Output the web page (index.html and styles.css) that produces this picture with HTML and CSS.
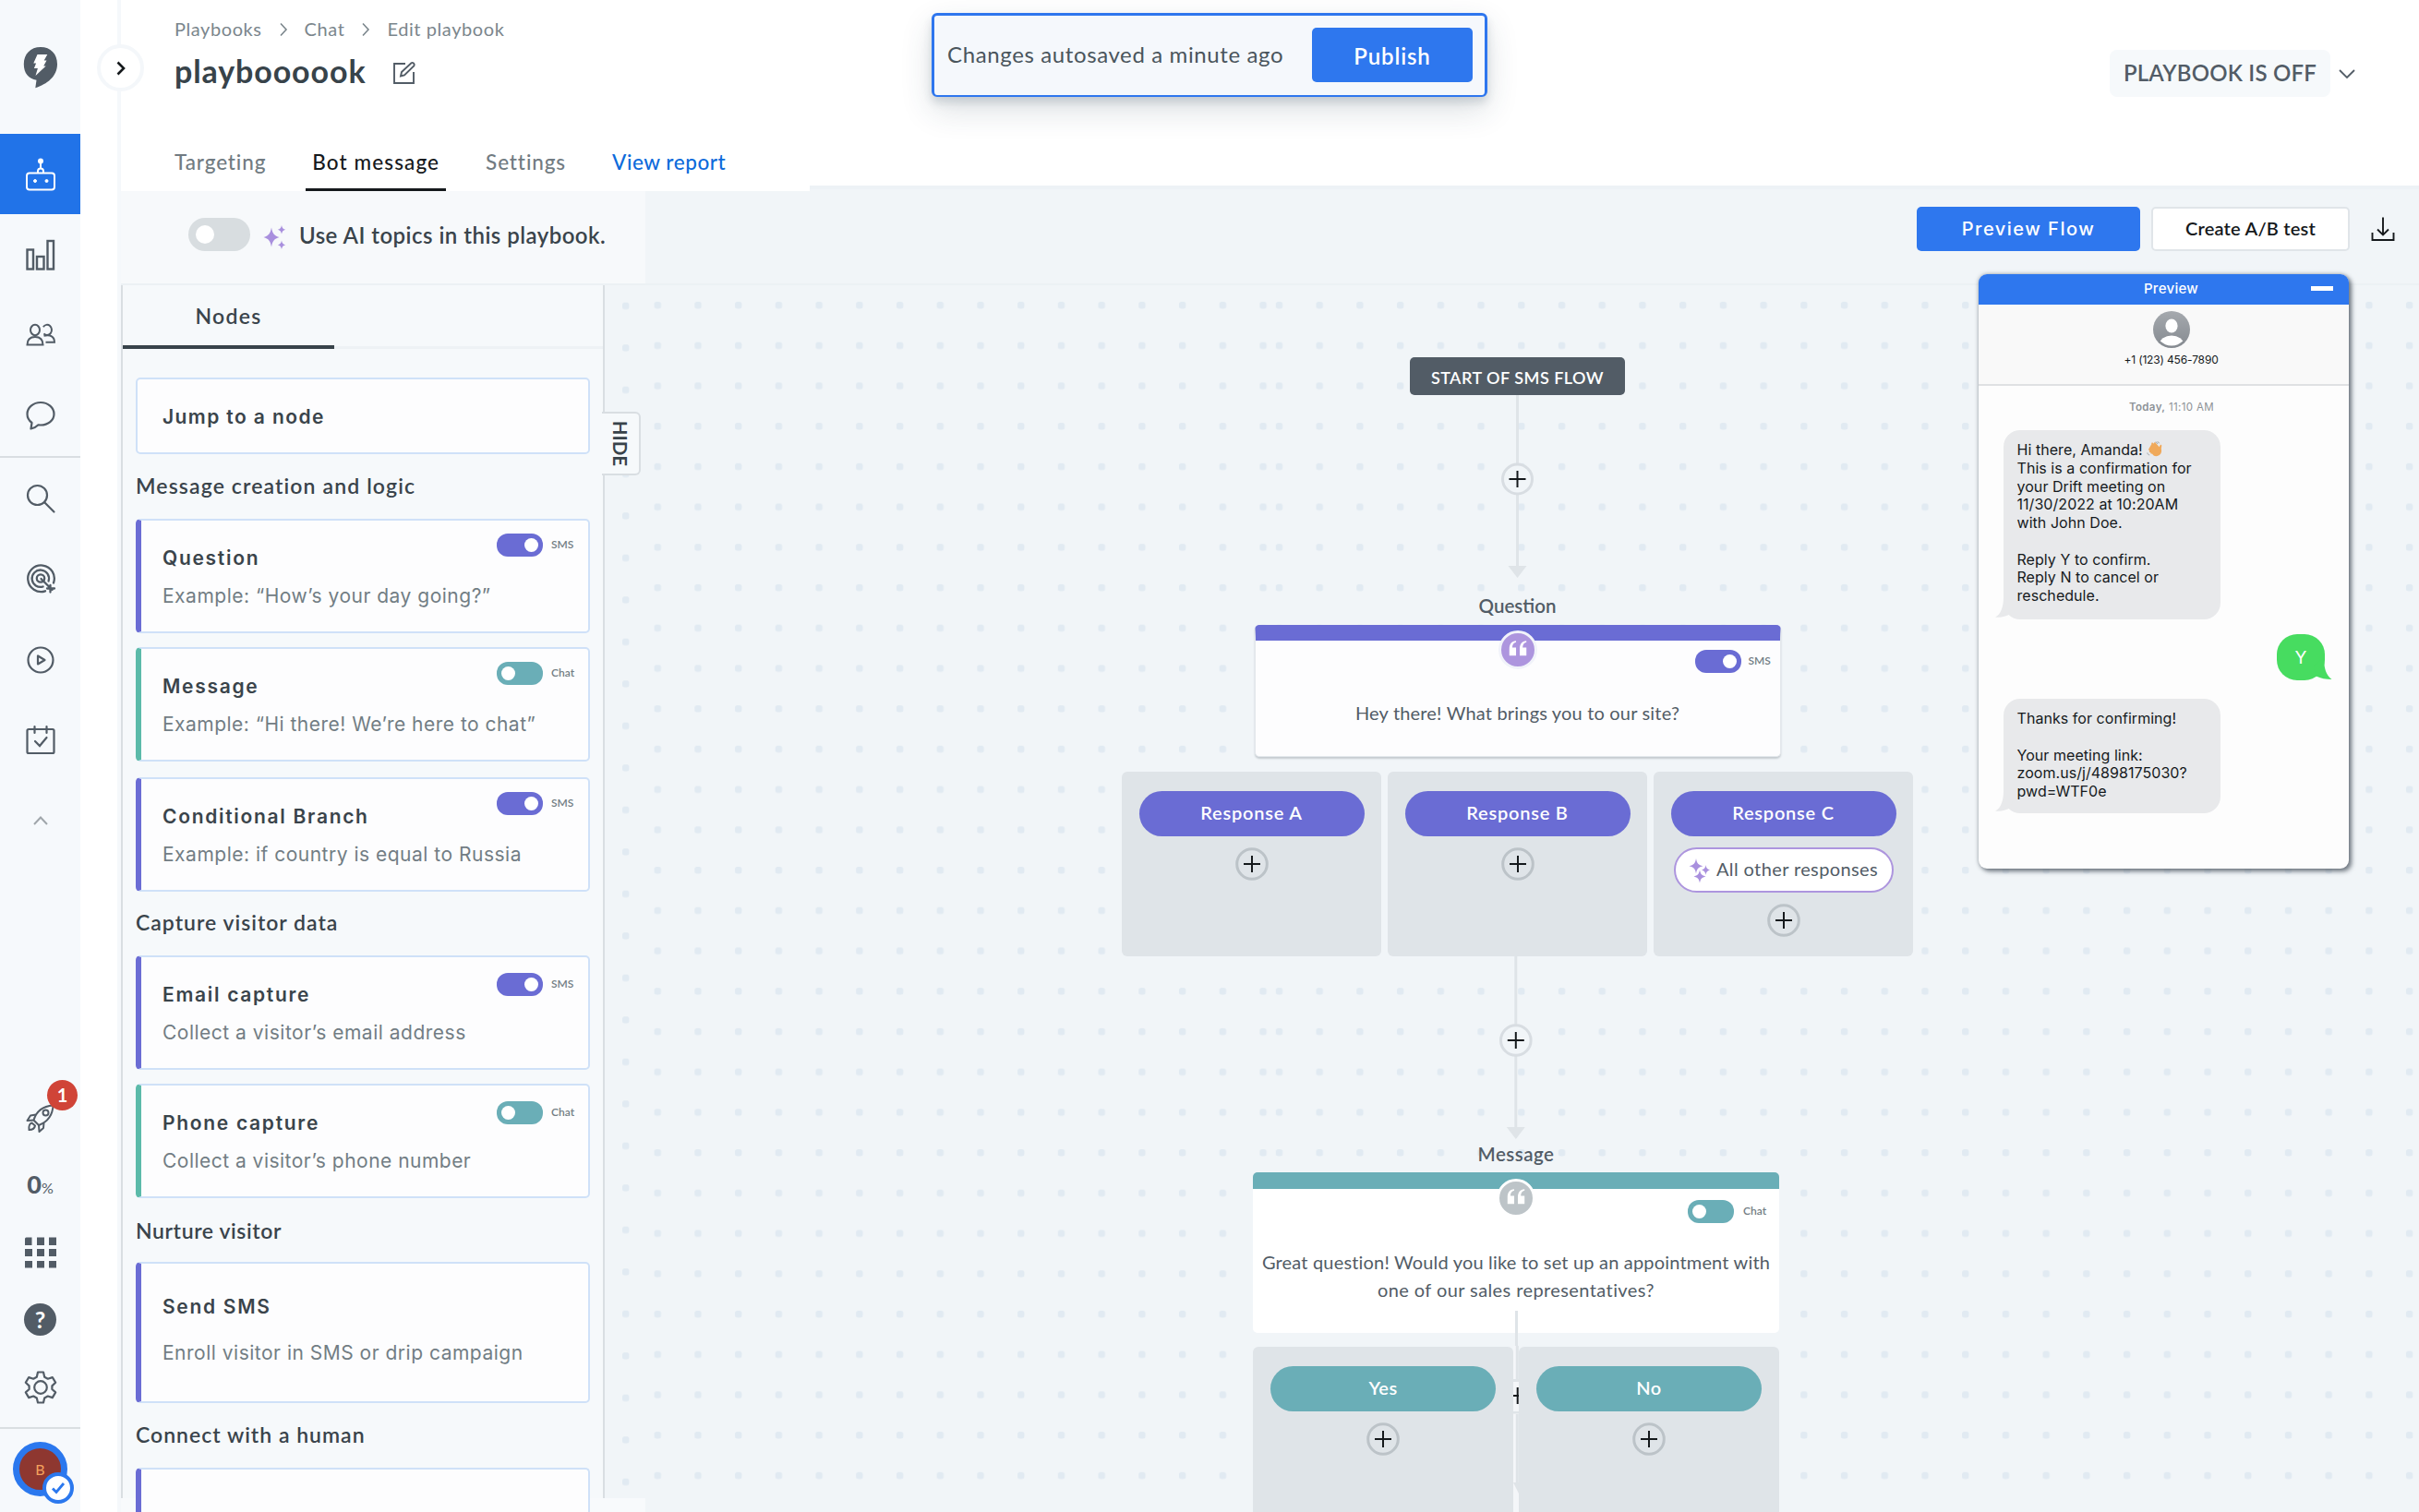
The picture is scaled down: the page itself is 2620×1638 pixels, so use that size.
FILE: index.html
```html
<!DOCTYPE html>
<html lang="en">
<head>
<meta charset="utf-8">
<title>Edit playbook</title>
<link rel="stylesheet" href="styles.css">
</head>
<body>
<svg class="defs" width="0" height="0" aria-hidden="true">
  <defs>
    <symbol id="plus" viewBox="0 0 36 36">
      <circle cx="18" cy="18" r="16.3" fill="none" stroke="currentColor" stroke-width="3"/>
      <path d="M18 9v18M9 18h18" stroke="#15191c" stroke-width="2" fill="none"/>
    </symbol>
    <symbol id="quote" viewBox="0 0 20 20">
      <path d="M8.200 2.600C5.600 3.300 4.500 5 4.500 7.800h3.700v7.800H1.600V9C1.600 4.500 3.800 1.500 8.200 1.200z" fill="#fff"/>
      <path d="M18.400 2.600c-2.600.7-3.700 2.400-3.700 5.200h3.700v7.800h-6.600V9c0-4.500 2.200-7.500 6.600-7.800z" fill="#fff"/>
    </symbol>
  </defs>
</svg>
<div class="app">
  <nav class="sidebar">
    <a class="cell logo"><svg width="40" height="46" viewBox="0 0 40 46"><path d="M20 1C9 1 1.800 8.500 1.800 19.500c0 10 5.200 15.800 13.700 17.200l-1.200 8.600C27 41 38 33 38 19.500 38 8.500 31 1 20 1z" fill="#525c66"/><path d="M16.500 9h10.800l-3.600 6.600h2.800l-3.300 6h2.500L14.500 32l2.400-8h-4l2.200-5.400h-2.800z" fill="#fff"/></svg></a>
    <a class="cell active"><svg width="36" height="38" viewBox="0 0 36 38" fill="none" stroke="#fff" stroke-width="2"><rect x="3" y="17.500" width="30" height="18" rx="3"/><path d="M15 17v-1.500a3 3 0 0 1 6 0V17M18 12V6"/><circle cx="18" cy="4.500" r="2" fill="#fff"/><circle cx="12" cy="26" r="1.500" fill="#fff" stroke-width="1"/><circle cx="24.500" cy="26" r="1.500" fill="#fff" stroke-width="1"/></svg></a>
    <a class="cell"><svg width="36" height="36" viewBox="0 0 36 36" fill="none" stroke="#525c66" stroke-width="2.400"><rect x="3.500" y="12.500" width="6.500" height="21"/><rect x="14" y="20" width="7.500" height="13.500"/><rect x="25.500" y="3" width="6.500" height="30.500"/></svg></a>
    <a class="cell"><svg width="34" height="26" viewBox="0 0 34 26" fill="none" stroke="#525c66" stroke-width="2"><ellipse cx="11" cy="7.500" rx="5" ry="5.700"/><path d="M2.500 23.500c0-6 2.500-8.600 8.500-8.600s8.500 2.600 8.500 8.600z"/><path d="M20.500 11.400a5 5.600 0 1 0-.6-7.200M20.500 13.800c7-1.600 11.500.6 11.500 6.900h-9.500"/></svg></a>
    <a class="cell"><svg width="34" height="34" viewBox="0 0 34 34" fill="none" stroke="#525c66" stroke-width="2.200" stroke-linejoin="round"><path d="M6.500 31.500l1-6.500C4.300 22.600 2.500 19.500 2.500 15.500 2.500 8.500 9 3 17 3s14.500 5.500 14.500 12.500S25 27.500 17 27.500l-2.500-.2c-2 2-4.500 3.700-8 4.200z"/></svg></a>
    <hr>
    <a class="cell"><svg width="34" height="34" viewBox="0 0 34 34" fill="none" stroke="#525c66" stroke-width="2.200" stroke-linecap="round"><circle cx="13.500" cy="13.500" r="10.500"/><path d="M21 21l10.500 10.500"/></svg></a>
    <a class="cell"><svg width="34" height="34" viewBox="0 0 34 34" fill="none" stroke="#525c66" stroke-width="2.300" stroke-linecap="round"><path d="M31 21.500A14.300 14.300 0 1 0 22 30.300"/><path d="M25.600 19.500a9.200 9.200 0 1 0-6 6"/><circle cx="17" cy="16.500" r="4.200"/><path d="M17.500 17l12 12M27.500 24v7.500M24 27.500h8"/></svg></a>
    <a class="cell"><svg width="34" height="34" viewBox="0 0 34 34" fill="none" stroke="#525c66" stroke-width="2.200" stroke-linejoin="round"><circle cx="17" cy="17" r="13.500"/><path d="M14 12.500v9l7.500-4.500z"/></svg></a>
    <a class="cell"><svg width="34" height="34" viewBox="0 0 34 34" fill="none" stroke="#525c66" stroke-width="2.200"><rect x="2.500" y="5" width="29" height="26" rx="1.500"/><path d="M10.500 2v7M23.500 2v7" stroke-linecap="round"/><path d="M11 18l5 5 7.500-9" stroke-linecap="round"/></svg></a>
    <a class="cell"><svg width="20" height="14" viewBox="0 0 20 14" fill="none" stroke="#a0a6ab" stroke-width="2"><path d="M3 11l7-7.500 7 7.500"/></svg></a>
    <div class="lower">
      <a class="tool"><svg width="34" height="34" viewBox="0 0 34 34" fill="none" stroke="#525c66" stroke-width="2" stroke-linejoin="round"><path d="M9.500 19.500C12 11 18 4.500 30.500 3.500c-.5 11.500-6.500 18-15.500 21.500z"/><circle cx="22.500" cy="11.500" r="3"/><path d="M12 13.500L6 14.500l-3.500 5.500 7-.5M20.500 22.500l-.5 5.500-4.500 4-.5-7M7.500 22.500c-2.500.5-3.500 4-3 7.500 3.500 0 6-1.500 6.500-4.500z"/></svg><span class="count">1</span></a>
      <a class="tool score"><b>0</b><small>%</small></a>
      <a class="tool"><svg width="34" height="34" viewBox="0 0 34 34" fill="#525c66"><path d="M0 2a1.500 1.500 0 0 1 1.500-1.500h6v8.500H0zM13 .5h8V9h-8zM26 .5h8V9h-8zM0 13h8v8H0zM13 13h8v8h-8zM26 13h8v8h-8zM0 26h8v7.500H0zM13 26h8v7.500h-8zM26 26h8v7.500h-8z"/></svg></a>
      <a class="tool"><span class="help">?</span></a>
      <a class="tool"><svg width="38" height="38" viewBox="0 0 38 38" fill="none" stroke="#525c66" stroke-width="2.200" stroke-linejoin="round"><circle cx="19" cy="19" r="6.800"/><path d="M16 2.500h6l1.200 5.200 3.600 2 5-1.600 3.400 5.700-3.800 3.600v3.600l3.800 3.400-3.400 5.700-5-1.600-3.600 2L22 35.500h-6l-1.200-5-3.600-2-5 1.600-3.400-5.700L6.600 21v-3.600l-3.800-3.600 3.400-5.700 5 1.600 3.600-2z"/></svg></a>
      <hr>
      <div class="avatar"><span>B</span><i><svg width="16" height="14" viewBox="0 0 16 14" fill="none" stroke="#2b78ee" stroke-width="2.800"><path d="M2 7.500l4 4L14 2"/></svg></i></div>
    </div>
  </nav>
  <div class="gutter"></div>
  <main class="main">
    <button class="expand"><svg width="14" height="18" viewBox="0 0 14 18" fill="none" stroke="#15191c" stroke-width="2.600"><path d="M3.500 2.500L10 9l-6.500 6.500"/></svg></button>
    <header class="header">
      <div class="head-left">
        <div class="crumbs"><span>Playbooks</span><svg width="10" height="16" viewBox="0 0 10 16"><path d="M2 1.500L8 8l-6 6.500"/></svg><span>Chat</span><svg width="10" height="16" viewBox="0 0 10 16"><path d="M2 1.500L8 8l-6 6.500"/></svg><span>Edit playbook</span></div>
        <div class="title"><h1>playboooook</h1><svg width="26" height="26" viewBox="0 0 26 26" fill="none" stroke="#525c66" stroke-width="1.900"><path d="M14 3H2v21h21V12"/><path d="M9 16.500l1-4.500L20.500 2.200c1.500-1 4 1 3 3L13 15.500z"/></svg></div>
        <div class="tabs"><a>Targeting</a><a class="on">Bot message</a><a>Settings</a><a class="link">View report</a></div>
      </div>
      <div class="head-right"><div class="status"><span class="off">PLAYBOOK IS OFF</span><svg width="20" height="14" viewBox="0 0 20 14" fill="none" stroke="#525c66" stroke-width="1.800"><path d="M2 3l8 8 8-8"/></svg></div></div>
    </header>
    <div class="toolbar">
      <div class="ai"><span class="switch big"></span><svg width="28" height="28" viewBox="0 0 28 28" fill="#a990de"><path d="M11 3.500c1.200 6.500 3 8.800 8.500 10.500-5.500 1.700-7.300 4-8.500 10.500C9.800 18 8 15.700 2.500 14 8 12.300 9.800 10 11 3.500zM22 1c.6 3 1.600 4 4.200 4.800C23.600 6.600 22.600 7.600 22 10.600c-.6-3-1.600-4-4.200-4.800C20.400 5 21.400 4 22 1zM22 17.500c.6 3 1.600 4 4.200 4.800-2.600.8-3.600 1.800-4.200 4.800-.6-3-1.600-4-4.200-4.800 2.600-.8 3.600-1.800 4.200-4.800z"/></svg><span class="ai-label">Use AI topics in this playbook.</span></div>
      <div class="actions"><button class="btn primary">Preview Flow</button><button class="btn">Create A/B test</button><svg width="28" height="28" viewBox="0 0 28 28" fill="none" stroke="#15191c" stroke-width="1.900"><path d="M14 1.500V20M8 14.500l6 6 6-6M2.500 18v8h23v-8"/></svg></div>
    </div>
    <div class="workspace">
      <aside class="panel">
        <div class="panel-tabs"><a>Nodes</a></div>
        <div class="nodes">
          <div class="card jump"><div class="txt"><b>Jump to a node</b></div></div>
          <h2>Message creation and logic</h2>
          <div class="card sms"><div class="txt"><b>Question</b><p>Example: “How’s your day going?”</p></div><div class="badge"><i class="switch on"></i><em>SMS</em></div></div>
          <div class="card chat"><div class="txt"><b>Message</b><p>Example: “Hi there! We’re here to chat”</p></div><div class="badge"><i class="switch"></i><em>Chat</em></div></div>
          <div class="card sms"><div class="txt"><b>Conditional Branch</b><p>Example: if country is equal to Russia</p></div><div class="badge"><i class="switch on"></i><em>SMS</em></div></div>
          <h2>Capture visitor data</h2>
          <div class="card sms"><div class="txt"><b>Email capture</b><p>Collect a visitor’s email address</p></div><div class="badge low"><i class="switch on"></i><em>SMS</em></div></div>
          <div class="card chat"><div class="txt"><b>Phone capture</b><p>Collect a visitor’s phone number</p></div><div class="badge low"><i class="switch"></i><em>Chat</em></div></div>
          <h2 class="nurture">Nurture visitor</h2>
          <div class="card sms tall"><div class="txt"><b>Send SMS</b><p>Enroll visitor in SMS or drip campaign</p></div></div>
          <h2>Connect with a human</h2>
          <div class="card sms cut"></div>
        </div>
        <button class="hide"><span>HIDE</span></button>
      </aside>
      <div class="canvas">
        <svg class="grid" width="1965" height="1329" viewBox="655 309 1965 1329">
          <defs>
            <pattern id="d1" patternUnits="userSpaceOnUse" x="674" y="327.700" width="30" height="45.500"><rect width="7.400" height="7.400" rx="2.500" fill="#e1eaf2"/></pattern>
            <pattern id="d2" patternUnits="userSpaceOnUse" x="708.600" y="326.900" width="43.720" height="43.720"><rect width="7.400" height="7.400" rx="2.500" fill="#e1eaf2"/></pattern>
            <pattern id="d3" patternUnits="userSpaceOnUse" x="1381.800" y="326.900" width="43.720" height="43.720"><rect width="7.400" height="7.400" rx="2.500" fill="#e1eaf2"/></pattern>
          </defs>
          <rect x="672" y="320" width="12" height="1292" fill="url(#d1)"/>
          <rect x="704" y="320" width="670" height="1290" fill="url(#d2)"/>
          <rect x="1378" y="320" width="1242" height="1290" fill="url(#d3)"/>
          <g stroke="#dfe4e8" stroke-width="3" fill="none"><path d="M1643.500 428v186M1641.800 1036v186"/></g>
          <path d="M1633.500 613h20l-10 13zM1631.800 1221h20l-10 13z" fill="#dfe4e8"/>
          <g fill="#f1f5f8" stroke="#d8dde2" stroke-width="3"><circle cx="1643.500" cy="519" r="16"/><circle cx="1641.800" cy="1127" r="16.300"/></g>
          <path d="M1643.500 510v18M1634.500 519h18M1641.800 1118v18M1632.800 1127h18" stroke="#15191c" stroke-width="2"/>
        </svg>
        <div class="start">START OF SMS FLOW</div>
        <section class="node question">
          <h3>Question</h3>
          <div class="box"><i class="q"><svg width="22" height="22"><use href="#quote"/></svg></i><div class="badge"><i class="switch on"></i><em>SMS</em></div><p>Hey there! What brings you to our site?</p></div>
          <div class="cols">
            <div><span class="pill">Response A</span><svg class="plus"><use href="#plus"/></svg></div>
            <div><span class="pill">Response B</span><svg class="plus"><use href="#plus"/></svg></div>
            <div><span class="pill">Response C</span><span class="other"><svg width="24" height="28" viewBox="0 0 24 28" fill="#a990de"><path d="M8 1c1 5.500 2.500 7 7.500 8.300C10.500 10.600 9 12 8 17.500 7 12 5.500 10.600.5 9.300 5.500 8 7 6.500 8 1zM18.500 8c.6 3.500 1.600 4.600 4.800 5.500-3.200.9-4.200 2-4.800 5.500-.6-3.500-1.600-4.600-4.800-5.500 3.200-.9 4.200-2 4.800-5.500zM12 13.500c.9 4.500 2.200 5.900 6.500 7-4.300 1.100-5.600 2.500-6.500 7-.9-4.500-2.200-5.900-6.500-7 4.300-1.100 5.600-2.500 6.500-7z"/></svg><span>All other responses</span></span><svg class="plus"><use href="#plus"/></svg></div>
          </div>
        </section>
        <section class="node message">
          <h3>Message</h3>
          <div class="box"><i class="q"><svg width="22" height="22"><use href="#quote"/></svg></i><div class="badge"><i class="switch"></i><em>Chat</em></div><p>Great question! Would you like to set up an appointment with<br><span class="wide">one of our sales representatives?</span></p></div>
          <div class="cols">
            <div><span class="pill">Yes</span><svg class="plus"><use href="#plus"/></svg></div>
            <div><span class="pill">No</span><svg class="plus"><use href="#plus"/></svg></div>
          </div>
          <svg class="stem" width="6" height="218" viewBox="0 0 6 218"><path d="M3.500 0v74" stroke="#dfe4e8" stroke-width="3"/><path d="M0 38h6v180H0z" fill="#f4f6f9"/><path d="M4.300 38v36" stroke="#dfe4e8" stroke-width="3"/><path d="M0 74h6v3H0zM0 109h6v2.500H0z" fill="#dfe4e8"/><path d="M4.700 83v18M0 92h6" stroke="#15191c" stroke-width="2"/><path d="M4.300 112v74" stroke="#dfe4e8" stroke-width="3"/><path d="M0 186h6v12z" fill="#dfe4e8"/></svg>
        </section>
      </div>
    </div>
    <div class="toast"><span>Changes autosaved a minute ago</span><button>Publish</button></div>
    <div class="phone">
      <div class="phone-bar">Preview<i></i></div>
      <div class="phone-head"><svg width="40" height="40" viewBox="0 0 40 40"><defs><linearGradient id="ava" x2="0" y2="1"><stop stop-color="#a5a9ae"/><stop offset="1" stop-color="#858a90"/></linearGradient><clipPath id="avc"><circle cx="20" cy="20" r="17.500"/></clipPath></defs><circle cx="20" cy="20" r="20" fill="url(#ava)"/><ellipse cx="20" cy="16" rx="6.600" ry="7.400" fill="#fff"/><ellipse cx="20" cy="36" rx="13" ry="9.500" fill="#fff" clip-path="url(#avc)"/></svg><span>+1 (123) 456-7890</span></div>
      <div class="chatlog">
        <time><b>Today,</b> 11:10 AM</time>
        <div class="bubble in first"><span>Hi there, Amanda! </span><svg width="17" height="17" viewBox="0 0 17 17"><path d="M3.500 6.200L2.200 8.500c-.5 1 .3 1.500 1 1.200L2.800 11c0 1 .8 1.400 1.500 1C4 13.500 5 14 6 13.600c1 2.200 4 3.400 6.800 2 3-1.500 3.800-4.600 3-7.400l.5-3.400c0-1.200-1.400-1.400-1.800-.3l-.8 1.800-4-4.600c-1-1-2.200 0-1.600 1L7 2C6 1 4.800 2 5.400 3z" fill="#f0a95a"/><path d="M9.500 1c1.200 0 2 .8 2.200 2M11.500.3c1 .3 1.700 1 2 2M.8 12.500c.2 1.500 1 2.200 2.400 2.400" stroke="#8d949a" stroke-width=".8" fill="none"/></svg><br>This is a confirmation for<br>your Drift meeting on<br>11/30/2022 at 10:20AM<br>with John Doe.<br><br>Reply Y to confirm.<br>Reply N to cancel or<br>reschedule.<svg class="tail" width="26" height="24" viewBox="0 0 26 24"><path d="M9 0C9 10 6 19 0 21.500c6 .8 11-.5 16-3L20 8z" fill="#e8e9eb"/></svg></div>
        <div class="bubble out">Y<svg class="tail" width="26" height="24" viewBox="0 0 26 24"><path d="M17 0c0 10 2 18 8.500 23-6 0-12-1-17-3.500L6 8z" fill="#47dc60"/></svg></div>
        <div class="bubble in last">Thanks for confirming!<br><br>Your meeting link:<br>zoom.us/j/4898175030?<br>pwd=WTF0e<svg class="tail" width="26" height="24" viewBox="0 0 26 24"><path d="M9 0C9 10 6 19 0 21.500c6 .8 11-.5 16-3L20 8z" fill="#e8e9eb"/></svg></div>
      </div>
    </div>
  </main>
</div>
</body>
</html>
```
FILE: styles.css
```css
* { box-sizing: border-box; }
body { margin: 0; width: 2620px; height: 1638px; overflow: hidden; font-family: Lato, "Liberation Sans", sans-serif; color: #3a444b; background: #f1f5f8; }
h1, h2, h3, p { margin: 0; }
button { font: inherit; padding: 0; border: 0; }
svg { display: block; flex: none; }
em, i { font-style: normal; }
.defs { position: absolute; }
.app { display: flex; height: 1638px; }

.sidebar { width: 87px; flex: none; background: #f6f9fc; display: flex; flex-direction: column; }
.sidebar hr { width: 100%; height: 2px; border: 0; margin: 0; background: #d9dee2; flex: none; }
.cell { height: 87.4px; flex: none; display: flex; align-items: center; justify-content: center; }
.logo { height: 145px; }
.active { background: #2173e8; height: 87px; }
.lower { margin-top: auto; display: flex; flex-direction: column; }
.tool { height: 73px; display: flex; align-items: center; justify-content: center; position: relative; }
.count { position: absolute; left: 51px; top: -4px; width: 33px; height: 33px; border-radius: 50%; background: #d04437; color: #fff; font-weight: 700; font-size: 20px; line-height: 32px; text-align: center; }
.score { align-items: baseline; color: #525c66; line-height: 72px; }
.score b { font-size: 27px; font-weight: 900; }
.score small { font-size: 16px; }
.help { width: 35px; height: 35px; border-radius: 50%; background: #525c66; color: #fff; text-align: center; font: 700 25px/35px Lato, sans-serif; }
.lower hr { margin-top: 7px; }
.avatar { position: relative; width: 59px; height: 59px; margin: 14px 0 17px 14px; border-radius: 50%; background: #8e3730; border: 7px solid #2b78ee; display: flex; align-items: center; justify-content: center; color: #f5a25c; font-size: 16px; }
.avatar i { position: absolute; left: 25px; top: 26px; width: 34px; height: 34px; border-radius: 50%; border: 4px solid #2b78ee; background: #fff; display: flex; align-items: center; justify-content: center; }
.gutter { width: 44px; flex: none; background: #fff; border-right: 4px solid #f5f8fb; }

.main { position: relative; flex: 1; min-width: 0; }
.expand { position: absolute; left: -26px; top: 48px; width: 51px; height: 51px; border-radius: 50%; border: 4px solid #f4f7fa; background: #fff; display: flex; align-items: center; justify-content: center; z-index: 2; }
.header { display: flex; height: 207px; }
.head-left { width: 746px; background: #fff; padding: 19px 0 0 58px; display: flex; flex-direction: column; }
.head-right { flex: 1; height: 205px; background: #fff; border-bottom: 4px solid #edf2f6; padding: 54px 68px 0 0; }
.crumbs { display: flex; align-items: center; font-size: 20px; line-height: 24px; letter-spacing: .58px; color: #7b868c; }
.crumbs svg { margin: 2px 18px 0 18px; fill: none; stroke: #7b868c; stroke-width: 1.6; }
.title { display: flex; align-items: center; gap: 28px; margin-top: 14px; }
.title h1 { font-size: 34px; line-height: 40px; letter-spacing: .9px; font-weight: 700; color: #38434a; }
.title svg { margin-top: 3px; }
.tabs { display: flex; margin-top: 64px; height: 46px; font-size: 22.500px; line-height: 29px; letter-spacing: .88px; font-weight: 500; color: #717b82; gap: 50px; }
.tabs .on { color: #15191c; border-bottom: 3px solid #15191c; padding: 0 7px; margin: 0 -7px; letter-spacing: 1.100px; }
.tabs .link { color: #0d6bdb; letter-spacing: .55px; }
.status { display: flex; justify-content: flex-end; align-items: center; gap: 8px; }
.off { background: #f6f9fb; border-radius: 8px; padding: 0 15px; font-size: 24px; line-height: 50px; height: 51px; letter-spacing: .21px; font-weight: 600; color: #525c66; }

.toolbar { display: flex; justify-content: space-between; height: 102px; border-bottom: 2px solid #ecf1f4; }
.ai { width: 568px; background: #f7f9fb; display: flex; padding: 29px 0 0 73px; }
.ai-label { font-size: 24px; line-height: 38px; letter-spacing: .47px; font-weight: 600; margin-left: 13px; }
.ai svg { margin: 7px 0 0 12px; }
.switch { display: block; flex: none; position: relative; width: 50px; height: 25px; border-radius: 12px; background: #6aaeb7; }
.switch::after { content: ""; position: absolute; left: 5px; top: 5px; width: 15px; height: 15px; border-radius: 50%; background: #fff; }
.switch.on { background: #6a6cd4; }
.switch.on::after { left: 30px; }
.switch.big { width: 67px; height: 36px; border-radius: 18px; background: #d8dde0; }
.switch.big::after { width: 20px; height: 20px; left: 8px; top: 8px; }
.actions { display: flex; gap: 12px; padding: 17px 25px 0 0; }
.btn { height: 48px; width: 215px; border-radius: 5px; background: #fff; border: 2px solid #e0e5e9; padding-bottom: 2px; font-size: 20px; letter-spacing: .22px; font-weight: 600; color: #15191c; }
.btn.primary { width: 242px; background: #2e77ee; color: #fff; border: 0; padding: 0; font-family: Inter, sans-serif; font-weight: 500; letter-spacing: 1.500px; }
.actions svg { margin: 10px 0 0 10px; }

.workspace { display: flex; height: 1329px; }
.panel { position: relative; width: 524px; height: 1314px; flex: none; border: 2px solid #d9dee2; border-width: 0 2px; background: #f6f9fb; }
.panel::after { content: ""; position: absolute; left: -2px; top: 1314px; width: 568px; height: 15px; background: #f8fafc; z-index: -1; }
.panel-tabs { height: 69px; display: flex; box-shadow: inset 0 -3px #eef2f5; }
.panel-tabs a { width: 229px; border-bottom: 4px solid #38434a; font-size: 23px; font-weight: 600; letter-spacing: 1.300px; line-height: 28px; padding-top: 19px; text-align: center; }
.nodes { padding: 31px 14px 0; display: flex; flex-direction: column; }
.card { position: relative; width: 492px; height: 124px; flex: none; margin-bottom: 15px; background: #fdfdfe; border: 2px solid #cfe1f8; border-radius: 5px; display: flex; font-family: Inter, sans-serif; }
.card.sms { border-left: 6px solid #6a6cd4; }
.card.chat { border-left: 6px solid #5bbaa9; margin-bottom: 17px; }
.card .txt { padding: 28px 0 0 23px; width: 385px; flex: none; white-space: nowrap; }
.card b { display: block; font-size: 21px; line-height: 26px; font-weight: 600; letter-spacing: 1.700px; }
.card p { font-size: 21px; line-height: 26px; margin-top: 15px; letter-spacing: .5px; color: #727d84; }
.chat p { letter-spacing: .48px; }
.jump { height: 83px; margin-bottom: 0; }
.jump .txt { padding-left: 27px; }
.jump b { letter-spacing: 1.400px; }
.card.tall { height: 153px; margin-bottom: 16px; }
.card.cut { height: 60px; margin: 0; border-bottom: 0; }
.tall .txt { padding-top: 34px; }
.tall p { margin-top: 24px; }
.nodes h2 { font-size: 23px; line-height: 28px; letter-spacing: 1px; font-weight: 600; margin: 4px 0 22px; }
.jump + h2 { margin-top: 20px; letter-spacing: 1.120px; }
.nodes h2.nurture { margin-bottom: 20px; letter-spacing: .6px; }
.badge { display: flex; gap: 9px; padding-top: 14px; font-family: Lato, sans-serif; }
.badge.low { padding-top: 17px; }
.badge em { font-size: 12px; line-height: 24px; font-weight: 600; color: #727d84; }
.hide { position: absolute; left: 519px; top: 137px; width: 42px; height: 69px; background: #f6f9fb; border: 2px solid #d9dee2; border-left: 0; border-radius: 0 6px 6px 0; display: flex; align-items: center; justify-content: center; }
.hide span { writing-mode: vertical-rl; font-size: 20px; font-weight: 700; letter-spacing: .3px; color: #38434a; }

.canvas { position: relative; flex: 1; }
.grid { position: absolute; left: 0; top: 0; z-index: -1; }
.start { position: absolute; left: 872px; top: 78px; width: 233px; height: 41px; border-radius: 5px; background: #525c66; color: #fff; font-size: 18px; font-weight: 600; letter-spacing: .48px; line-height: 44px; text-align: center; }
.node { position: absolute; display: flex; flex-direction: column; align-items: center; color: #525c66; }
.question { left: 560px; top: 334px; width: 857px; }
.message { left: 702px; top: 928px; width: 570px; }
.node h3 { font-size: 20.500px; line-height: 26px; height: 24px; font-weight: 600; }
.message h3 { letter-spacing: .5px; }
.box { position: relative; width: 570px; height: 143px; margin-top: 10px; background: #fdfdfe; border: 1px solid #e3e8ec; border-top: 17px solid #6a6cd4; border-radius: 5px; box-shadow: 0 2px 2px #c5cbd0; text-align: center; font-size: 20px; letter-spacing: .18px; }
.box p { padding-top: 64px; line-height: 30px; white-space: nowrap; }
.question .box p { padding-top: 63px; }
.wide { letter-spacing: .41px; }
.box .badge { position: absolute; left: 476px; top: -4px; gap: 8px; letter-spacing: 0; }
.message .box { height: 174px; margin-top: 9px; background: #fff; border: 0; border-top: 18px solid #6aaeb7; box-shadow: none; }
.message .box .badge { left: 471px; top: -2px; gap: 10px; }
.q { position: absolute; left: 263px; top: -11px; width: 42px; height: 42px; border-radius: 50%; border: 3px solid #f1f3fa; background: #ad95de; display: flex; align-items: center; justify-content: center; }
.message .q { left: 264px; background: #bdc4c8; border-color: #fff; }
.cols { display: flex; gap: 7px; width: 857px; margin-top: 16px; }
.cols > div { flex: 1; height: 200px; border-radius: 6px; background: #dfe4e8; padding-top: 21px; display: flex; flex-direction: column; align-items: center; }
.message .cols { width: 570px; gap: 6px; margin-top: 15px; }
.pill { width: 244px; height: 49px; border-radius: 25px; background: #6a6cd4; color: #fff; font-size: 20px; line-height: 47px; font-weight: 600; letter-spacing: .77px; text-align: center; }
.message .pill { background: #6aaeb7; letter-spacing: .4px; }
.plus { width: 36px; height: 36px; margin-top: 12px; color: #bcc3c8; }
.other { width: 238px; height: 49px; margin-top: 12px; border-radius: 25px; background: #fff; border: 2px solid #ad95de; display: flex; align-items: center; justify-content: center; gap: 6px; font-size: 20px; letter-spacing: .39px; }
.other span { padding-bottom: 4px; }
.stem { position: absolute; left: 282px; top: 183px; }

.toast { position: absolute; left: 878px; top: 14px; width: 602px; height: 91px; border: 3px solid #2e76ee; border-bottom-width: 2px; border-radius: 6px; background: #f5f8fc; box-shadow: 0 14px 34px rgba(40, 60, 80, .16), 0 6px 10px rgba(40, 60, 80, .16); display: flex; justify-content: space-between; padding: 13px 13px 0 14px; font-size: 24px; line-height: 57px; letter-spacing: .62px; color: #4a555c; z-index: 3; }
.toast button { width: 174px; height: 59px; border-radius: 5px; background: #2e77ee; color: #fff; font-weight: 600; letter-spacing: .88px; padding-top: 2px; line-height: 56px; }

.phone { position: absolute; left: 2012px; top: 297px; width: 401px; height: 644px; border-radius: 9px; background: #fdfdfd; box-shadow: 3px 3px 5px rgba(80, 90, 100, .75), 0 0 4px rgba(80, 90, 100, .5); font-family: Inter, sans-serif; color: #15191c; z-index: 2; }
.phone-bar { position: relative; height: 33px; border-radius: 9px 9px 0 0; background: #2e77ee; color: #fff; font-size: 15px; line-height: 32px; letter-spacing: .3px; font-weight: 500; text-align: center; padding-left: 16px; }
.phone-bar i { position: absolute; right: 17px; top: 13px; width: 24px; height: 5px; background: #fff; }
.phone-head { height: 88px; background: #f9f9f9; border-bottom: 2px solid #dfe1e3; display: flex; flex-direction: column; align-items: center; padding: 7px 0 0 16px; font-size: 12px; letter-spacing: -.15px; }
.phone-head span { line-height: 16px; margin-top: 5px; }
.chatlog { display: flex; flex-direction: column; }
.chatlog time { align-self: center; margin: 15px 0 0 17px; font-size: 11.500px; line-height: 16px; letter-spacing: .37px; color: #8d9297; }
.chatlog time b { font-weight: 600; }
.bubble { position: relative; font-size: 16px; line-height: 19.750px; letter-spacing: .05px; border-radius: 18px; background: #e8e9eb; }
.bubble.in { width: 235px; margin-left: 27px; padding: 12px 0 0 14.500px; white-space: nowrap; }
.bubble span + svg { display: inline-block; vertical-align: -2px; }
.first { height: 205px; margin-top: 17px; }
.last { height: 124px; }
.in .tail { position: absolute; left: -9px; bottom: 0; }
.out { align-self: flex-end; width: 52px; height: 50px; margin: 16px 26px 20px 0; border-radius: 22px; background: #47dc60; color: #fff; font-size: 19px; line-height: 51px; text-align: center; }
.out .tail { position: absolute; right: -8px; bottom: 0; }
```
